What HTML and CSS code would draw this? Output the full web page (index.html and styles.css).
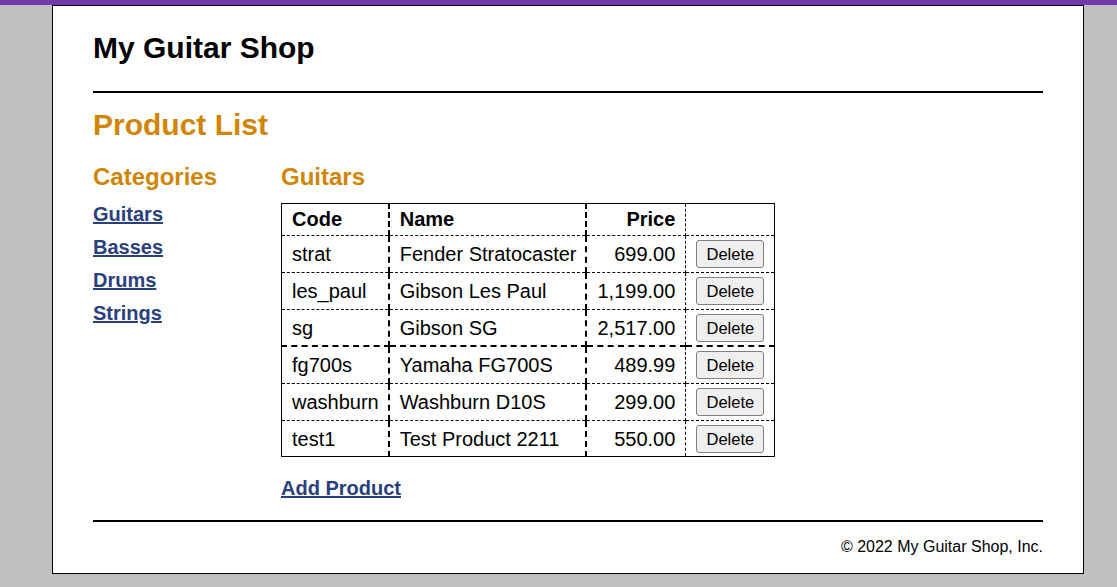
FILE: index.html
```html
<!DOCTYPE html>
<html lang="en">
<head>
<meta charset="utf-8">
<title>My Guitar Shop</title>
<link rel="stylesheet" href="styles.css">
</head>
<body>
<div class="topbar"></div>
<div class="page">
  <header class="header">
    <h1 class="site-title">My Guitar Shop</h1>
  </header>
  <main class="main">
    <h1 class="page-title">Product List</h1>
    <div class="columns">
      <aside class="sidebar">
        <h2 class="section-title">Categories</h2>
        <ul class="cat-list">
          <li><a class="link" href="#">Guitars</a></li>
          <li><a class="link" href="#">Basses</a></li>
          <li><a class="link" href="#">Drums</a></li>
          <li><a class="link" href="#">Strings</a></li>
        </ul>
      </aside>
      <section class="content">
        <h2 class="section-title">Guitars</h2>
        <table class="products">
          <tr>
            <th class="c1">Code</th>
            <th class="c2">Name</th>
            <th class="c3 right">Price</th>
            <th class="c4">&nbsp;</th>
          </tr>
          <tr>
            <td class="c1">strat</td>
            <td class="c2">Fender Stratocaster</td>
            <td class="c3 right">699.00</td>
            <td class="c4"><button class="btn" type="button">Delete</button></td>
          </tr>
          <tr>
            <td class="c1">les_paul</td>
            <td class="c2">Gibson Les Paul</td>
            <td class="c3 right">1,199.00</td>
            <td class="c4"><button class="btn" type="button">Delete</button></td>
          </tr>
          <tr class="thick-bottom">
            <td class="c1">sg</td>
            <td class="c2">Gibson SG</td>
            <td class="c3 right">2,517.00</td>
            <td class="c4"><button class="btn" type="button">Delete</button></td>
          </tr>
          <tr>
            <td class="c1">fg700s</td>
            <td class="c2">Yamaha FG700S</td>
            <td class="c3 right">489.99</td>
            <td class="c4"><button class="btn" type="button">Delete</button></td>
          </tr>
          <tr>
            <td class="c1">washburn</td>
            <td class="c2">Washburn D10S</td>
            <td class="c3 right">299.00</td>
            <td class="c4"><button class="btn" type="button">Delete</button></td>
          </tr>
          <tr class="last-row">
            <td class="c1">test1</td>
            <td class="c2">Test Product 2211</td>
            <td class="c3 right">550.00</td>
            <td class="c4"><button class="btn" type="button">Delete</button></td>
          </tr>
        </table>
        <p class="add"><a class="link" href="#">Add Product</a></p>
      </section>
    </div>
  </main>
  <footer class="footer">
    <p class="copy">&copy; 2022 My Guitar Shop, Inc.</p>
  </footer>
</div>
</body>
</html>
```
FILE: styles.css
```css
html, body {
  margin: 0;
  padding: 0;
}
body {
  background: #c0c0c0;
  font-family: "Liberation Sans", Arial, sans-serif;
  font-size: 20px;
  color: #000;
}
.topbar {
  height: 5px;
  background: #7038a8;
}
.page {
  width: 950px;
  margin-left: 52px;
  padding: 0 40px;
  background: #fff;
  border: 1px solid #000;
}
.header {
  padding: 25px 0 26px;
  border-bottom: 2px solid #000;
}
.site-title {
  margin: 0;
  font-size: 30px;
  line-height: 34px;
  font-weight: bold;
  color: #000;
}
.page-title {
  margin: 15px 0 0;
  font-size: 30px;
  line-height: 34px;
  color: rgb(208, 133, 4);
}
.columns {
  display: flex;
  margin-top: 21px;
}
.sidebar {
  width: 188px;
  flex: none;
}
.section-title {
  margin: 0;
  font-size: 24px;
  line-height: 28px;
  color: rgb(208, 133, 4);
}
.cat-list {
  list-style: none;
  margin: 12px 0 0;
  padding: 0;
}
.cat-list li {
  line-height: 23px;
  margin-bottom: 10px;
}
.link {
  color: #29407c;
  font-weight: bold;
  text-decoration: underline;
}
.content {
  flex: 1;
}
.products {
  margin-top: 12px;
  border-collapse: collapse;
  border: 1px solid #000;
}
.products th,
.products td {
  border: 1px dashed #000;
  padding: 4px 10px;
  line-height: 23px;
  text-align: left;
  white-space: nowrap;
}
.products th {
  font-weight: bold;
}
.products .c1,
.products .c2 {
  border-right: 2px dashed #000;
  padding-right: 9px;
}
.products .right {
  text-align: right;
}
.products tr:first-child th {
  border-top: 1px solid #000;
}
.products .c1 {
  border-left: 1px solid #000;
}
.products .c4 {
  border-right: 1px solid #000;
}
.products .last-row td {
  border-bottom: 1px solid #000;
  padding-bottom: 3px;
}
.products .thick-bottom td {
  border-bottom: 2px dashed #000;
  padding-bottom: 3px;
}
.btn {
  box-sizing: border-box;
  width: 68px;
  height: 28px;
  padding: 0;
  font-family: "Liberation Sans", Arial, sans-serif;
  font-size: 16.5px;
  color: #000;
  background: #efefef;
  border: 1px solid #808080;
  border-radius: 3px;
  vertical-align: middle;
}
.add {
  margin: 20px 0 0;
  line-height: 23px;
}
.footer {
  margin-top: 20px;
  border-top: 2px solid #000;
  padding: 16px 0 17px;
}
.copy {
  margin: 0;
  font-size: 16px;
  line-height: 18px;
  text-align: right;
}
```
